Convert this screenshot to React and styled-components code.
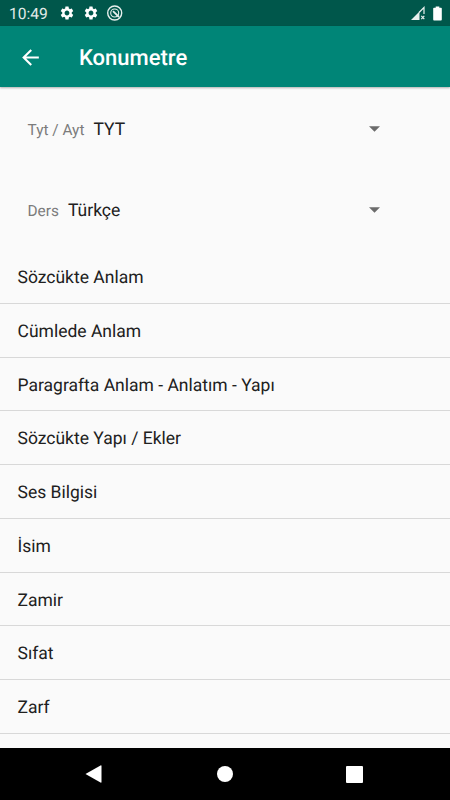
import React from 'react';
import styled, { createGlobalStyle } from 'styled-components';
import { MdSettings, MdArrowBack } from 'react-icons/md';

const GlobalStyle = createGlobalStyle`
  * {
    box-sizing: border-box;
  }

  body {
    margin: 0;
    background: #fafafa;
    font-family: Roboto, 'Noto Sans', sans-serif;
    text-rendering: geometricPrecision;
  }
`;

const Screen = styled.div`
  display: flex;
  flex-direction: column;
  width: 450px;
  height: 800px;
  overflow: hidden;
  background: #fafafa;
`;

const StatusBar = styled.div`
  display: flex;
  flex: none;
  align-items: center;
  height: 26px;
  padding: 0 8px 0 9px;
  background: #00574b;
  color: #fff;
`;

const Clock = styled.span`
  width: 50px;
  padding-top: 2px;
  font-size: 15.6px;
  line-height: 20px;
  color: #e0eae8;
`;

const StatusIcons = styled.div`
  display: flex;
  flex: 1;
  align-items: center;
  gap: 8.2px;
`;

const SignalIcons = styled.div`
  display: flex;
  align-items: center;
  gap: 8px;
`;

const AppBar = styled.header`
  display: flex;
  flex: none;
  align-items: center;
  height: 61px;
  padding: 1px 0 0 18px;
  gap: 36px;
  background: #008577;
  color: #fff;
  box-shadow: 0 1px 2px rgba(0, 0, 0, 0.3);
`;

const Title = styled.h1`
  margin: 0;
  padding-top: 3px;
  font-size: 22px;
  font-weight: 500;
  line-height: 26px;
`;

const Filters = styled.div`
  flex: none;
  height: 163px;
  padding: 1px 70px 0 27.5px;
`;

const Filter = styled.div`
  display: flex;
  align-items: center;
  height: 81.2px;
`;

const FilterLabel = styled.span`
  margin-right: 9px;
  padding-top: 3px;
  font-size: 15.4px;
  color: #7c7c7c;
`;

const FilterValue = styled.span`
  flex: 1;
  padding-top: 3px;
  font-size: 17.5px;
  color: #202020;
`;

const Caret = styled.svg`
  display: block;
  flex: none;
`;

const TopicList = styled.ul`
  flex: 1;
  min-height: 0;
  margin: 0;
  padding: 0;
  overflow: hidden;
  list-style: none;
`;

const Topic = styled.li`
  display: flex;
  align-items: center;
  height: 53.75px;
  padding: 3.5px 17.5px 0;
  border-bottom: 1px solid #d8d8d8;
  font-size: 17.5px;
  color: #202020;
`;

const NavBar = styled.nav`
  display: flex;
  flex: none;
  align-items: center;
  justify-content: space-between;
  height: 52px;
  padding: 0 87px 0 85px;
  background: #000;
`;

const filters = [
  { label: 'Tyt / Ayt', value: 'TYT' },
  { label: 'Ders', value: 'Türkçe' },
];

const topics = [
  'Sözcükte Anlam',
  'Cümlede Anlam',
  'Paragrafta Anlam - Anlatım - Yapı',
  'Sözcükte Yapı / Ekler',
  'Ses Bilgisi',
  'İsim',
  'Zamir',
  'Sıfat',
  'Zarf',
  '',
];

const DebugIcon = () => (
  <svg width="16" height="16" viewBox="0 0 16 16" fill="none" stroke="#e8f0ee">
    <circle cx="7.7" cy="8" r="7" strokeWidth="1.4" />
    <circle cx="7.7" cy="8" r="4" strokeWidth="1.1" />
    <path d="M6 6.2 12 12" strokeWidth="1.8" />
  </svg>
);

const SignalIcon = () => (
  <svg width="14" height="15" viewBox="0 0 14 15">
    <path d="M0 14 8.5 5.5V14Z" fill="#e8f0ee" />
    <path d="M8 6.5 13 1.5V8" fill="none" stroke="#e8f0ee" strokeWidth="1.2" />
    <path d="M10.3 9.8l3 3.4M13.3 9.8l-3 3.4" stroke="#e8f0ee" strokeWidth="1.2" />
  </svg>
);

const BatteryIcon = () => (
  <svg width="9" height="15" viewBox="0 0 9 15" fill="#fff">
    <path d="M2.7 0.5h3.6v1.3H8q.8 0 .8.8v11q0 .9-.8.9H1q-.8 0-.8-.9v-11q0-.8.8-.8h1.7Z" />
  </svg>
);

const App = () => {
  return (
    <>
      <GlobalStyle />
      <Screen>
        <StatusBar>
          <Clock>10:49</Clock>
          <StatusIcons>
            <MdSettings size={16} />
            <MdSettings size={16} />
            <DebugIcon />
          </StatusIcons>
          <SignalIcons>
            <SignalIcon />
            <BatteryIcon />
          </SignalIcons>
        </StatusBar>
        <AppBar>
          <MdArrowBack size={25} />
          <Title>Konumetre</Title>
        </AppBar>
        <Filters>
          {filters.map(({ label, value }) => (
            <Filter key={label}>
              <FilterLabel>{label}</FilterLabel>
              <FilterValue>{value}</FilterValue>
              <Caret width="11" height="6" viewBox="0 0 11 6">
                <path d="M0 0.2h11L5.5 5.7Z" fill="#6b6b6b" />
              </Caret>
            </Filter>
          ))}
        </Filters>
        <TopicList>
          {topics.map((topic, index) => (
            <Topic key={index}>{topic}</Topic>
          ))}
        </TopicList>
        <NavBar>
          <svg width="18" height="18" viewBox="0 0 18 18" fill="#fff">
            <path d="M0.5 9 15.5 .4Q16.5 0 16.5 1v16q0 1-1 .6Z" />
          </svg>
          <svg width="16" height="16" viewBox="0 0 16 16" fill="#fff">
            <circle cx="8" cy="8" r="8" />
          </svg>
          <svg width="17" height="17" viewBox="0 0 17 17" fill="#fff">
            <rect width="17" height="17" rx="1" />
          </svg>
        </NavBar>
      </Screen>
    </>
  );
};

export default App;
